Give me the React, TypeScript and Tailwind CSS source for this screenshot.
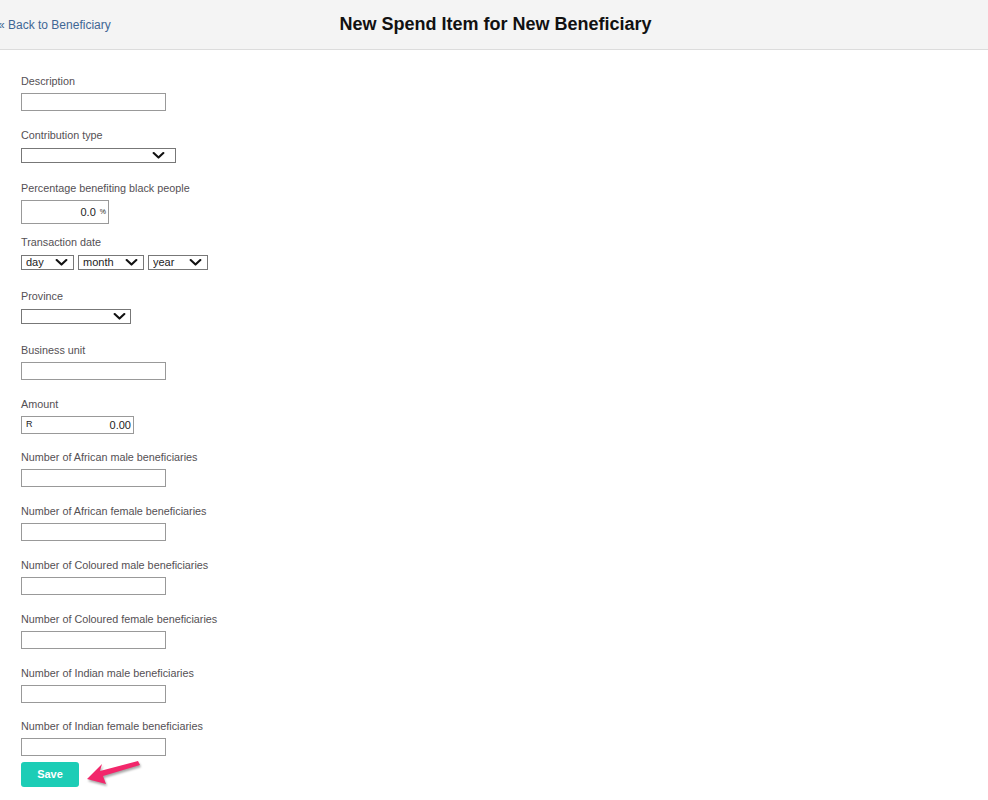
import { ReactNode } from 'react';

type Field = {
  label: string;
  height: string;
  control: ReactNode;
};

function Chevron({ className = '' }: { className?: string }) {
  return (
    <svg viewBox="0 0 14 8" className={`pointer-events-none absolute top-[4px] h-[7px] w-[13px] ${className}`} aria-hidden="true">
      <path d="M1.5 1.2 7 6.4l5.5-5.2" fill="none" stroke="#111" strokeWidth="2.4" strokeLinecap="round" strokeLinejoin="round" />
    </svg>
  );
}

function TextBox({ width = 'w-[145px]' }: { width?: string }) {
  return <input type="text" className={`block ${width} h-[18px] border border-[#999] bg-white px-1 text-[11px] outline-none`} />;
}

function SelectBox({ width, value = '', chevronRight = 'right-[11px]' }: { width: string; value?: string; chevronRight?: string }) {
  return (
    <div className={`relative ${width} h-[15px]`}>
      <select className="block h-[15px] w-full appearance-none border border-[#777] bg-white pl-[4px] text-[11px] leading-[13px] text-[#222] outline-none">
        <option>{value}</option>
      </select>
      <Chevron className={chevronRight} />
    </div>
  );
}

const fields: Field[] = [
  { label: 'Description', height: 'h-[54px]', control: <TextBox /> },
  { label: 'Contribution type', height: 'h-[53px]', control: <div className="pt-[1px]"><SelectBox width="w-[155px]" /></div> },
  {
    label: 'Percentage benefiting black people',
    height: 'h-[54px]',
    control: (
      <div className="flex h-[24px] w-[88px] items-center justify-end border border-[#999] bg-white pr-[2px] text-[11px] text-[#222]">
        <span>0.0</span>
        <span className="ml-[4px] text-[7px]">%</span>
      </div>
    ),
  },
  {
    label: 'Transaction date',
    height: 'h-[54px]',
    control: (
      <div className="flex gap-[4px] pt-[1px]">
        <SelectBox width="w-[53px]" value="day" chevronRight="right-[6px]" />
        <SelectBox width="w-[66px]" value="month" chevronRight="right-[6px]" />
        <SelectBox width="w-[60px]" value="year" chevronRight="right-[6px]" />
      </div>
    ),
  },
  { label: 'Province', height: 'h-[54px]', control: <div className="pt-[1px]"><SelectBox width="w-[110px]" chevronRight="right-[5px]" /></div> },
  { label: 'Business unit', height: 'h-[54px]', control: <TextBox /> },
  {
    label: 'Amount',
    height: 'h-[53px]',
    control: (
      <div className="flex h-[18px] w-[113px] items-center justify-between border border-[#999] bg-white pl-[4px] pr-[2px] text-[11px] text-[#222]">
        <span className="text-[9px]">R</span>
        <span>0.00</span>
      </div>
    ),
  },
  { label: 'Number of African male beneficiaries', height: 'h-[54px]', control: <TextBox /> },
  { label: 'Number of African female beneficiaries', height: 'h-[54px]', control: <TextBox /> },
  { label: 'Number of Coloured male beneficiaries', height: 'h-[54px]', control: <TextBox /> },
  { label: 'Number of Coloured female beneficiaries', height: 'h-[54px]', control: <TextBox /> },
  { label: 'Number of Indian male beneficiaries', height: 'h-[53px]', control: <TextBox /> },
  { label: 'Number of Indian female beneficiaries', height: 'h-[36px]', control: <TextBox /> },
];

export default function App() {
  return (
    <div className="min-h-[800px] bg-white font-['Liberation_Sans',Arial,sans-serif]">
      <header className="grid h-[50px] grid-cols-[1fr_auto_1fr] items-center border-b border-[#dcdcdc] bg-[#f4f4f4]">
        <a href="#" className="-ml-[2px] text-[12px] text-[#3f6795]">
          « Back to Beneficiary
        </a>
        <h1 className="ml-[3px] text-[18px] font-bold text-[#111]">New Spend Item for New Beneficiary</h1>
        <div />
      </header>

      <form className="px-[21px] pt-[25px]">
        {fields.map((field) => (
          <div key={field.label} className={field.height}>
            <label className="block h-[12px] text-[10.8px] leading-[12px] text-[#545054]">{field.label}</label>
            <div className="mt-[6px]">{field.control}</div>
          </div>
        ))}

        <div className="relative mt-[6px]">
          <button
            type="button"
            className="block h-[25px] w-[58px] rounded-[3px] bg-[#1ccdb6] text-[11px] font-bold text-white"
          >
            Save
          </button>
          {/* pointer arrow next to the button */}
          <svg viewBox="0 0 60 30" className="absolute left-[63px] -top-[4px] h-[30px] w-[60px] drop-shadow-[1px_2px_1px_rgba(0,0,0,0.35)]" aria-hidden="true">
            <polygon points="3,21 18,6 16,13 54,3 56,7 19,18 22,26" fill="#f2276b" />
          </svg>
        </div>
      </form>
    </div>
  );
}
